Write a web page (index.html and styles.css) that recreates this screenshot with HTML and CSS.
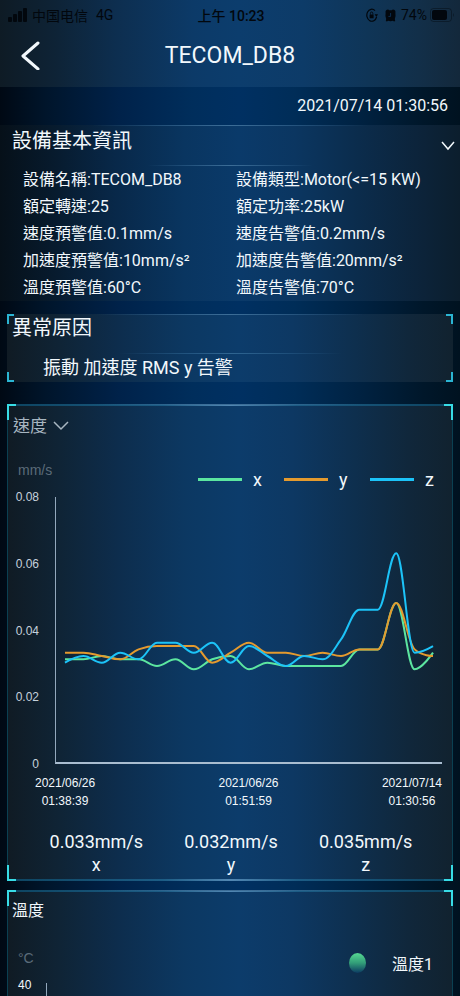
FILE: index.html
```html
<!DOCTYPE html>
<html lang="zh-Hant">
<head>
<meta charset="utf-8">
<meta name="viewport" content="width=device-width, initial-scale=1">
<title>TECOM_DB8</title>
<link rel="stylesheet" href="styles.css">
</head>
<body>
<div class="app">
  <header class="top">
    <div class="status">
      <div class="status-side">
        <svg class="signal" viewBox="0 0 20 14" aria-hidden="true"><rect x="0" y="9" width="4" height="5" rx="1"/><rect x="5" y="6" width="4" height="8" rx="1"/><rect x="10" y="3" width="4" height="11" rx="1"/><rect x="15" y="0" width="4" height="14" rx="1"/></svg>
        <span lang="zh-Hans">中国电信</span><span class="network">4G</span>
      </div>
      <div class="clock">上午 10:23</div>
      <div class="status-side status-end">
        <svg class="lock" viewBox="0 0 12 14" aria-hidden="true"><path d="M9 2.6A5 6 0 1 0 10.6 9" fill="none" stroke="currentColor" stroke-width="1.2"/><path d="M8.6 6.2h3.4L10.4 9z"/><rect x="3.6" y="6.4" width="4" height="3.8" rx=".5"/><path d="M4.4 6.6V5.4a1.2 1.4 0 0 1 2.4 0v1.2" fill="none" stroke="currentColor" stroke-width=".9"/></svg>
        <svg class="alarm" viewBox="0 0 11 13" aria-hidden="true"><path d="M.6 4Q0 .8 3.2.6L4.200 1.200h2.600L7.800 .6Q11 .8 10.400 4 11 7 9.800 10l.4 2-1.200.6-1-.9q-2.500.9-5 0l-1 .9L.8 12l.4-2Q0 7 .6 4z"/><path d="M5.600 4v3.400H3.400" fill="none" stroke="#0b3157" stroke-width=".9"/></svg>
        <span>74%</span>
        <svg class="battery" viewBox="0 0 24 14" aria-hidden="true"><rect x=".5" y=".5" width="21" height="13" rx="3" fill="none" stroke="currentColor" stroke-opacity=".4"/><rect x="2" y="2" width="15" height="10" rx="2"/><path d="M23 5v4q1.500-2 0-4" fill-opacity=".5"/></svg>
      </div>
    </div>
    <div class="nav">
      <button class="back" type="button" aria-label="返回"><svg viewBox="0 0 20 30" aria-hidden="true"><path d="M17 3 2 16l15 13" fill="none" stroke="currentColor" stroke-width="3" stroke-linecap="round" stroke-linejoin="round"/></svg></button>
      <h1>TECOM_DB8</h1>
    </div>
  </header>

  <main>
    <time class="stamp" datetime="2021-07-14T01:30:56">2021/07/14 01:30:56</time>

    <section class="info">
      <div class="info-head">
        <h2>設備基本資訊</h2>
        <button class="toggle" type="button" aria-label="收合"><svg viewBox="0 0 14 10" aria-hidden="true"><path d="M1 1l6 7 6-7" fill="none" stroke="currentColor" stroke-width="1.500"/></svg></button>
      </div>
      <div class="facts">
        <span>設備名稱:TECOM_DB8</span><span>設備類型:Motor(&lt;=15 KW)</span>
        <span>額定轉速:25</span><span>額定功率:25kW</span>
        <span>速度預警值:0.1mm/s</span><span>速度告警值:0.2mm/s</span>
        <span>加速度預警值:10mm/s²</span><span>加速度告警值:20mm/s²</span>
        <span>溫度預警值:60°C</span><span>溫度告警值:70°C</span>
      </div>
    </section>

    <section class="framed cause">
      <h2>異常原因</h2>
      <p>振動 加速度 RMS y 告警</p>
    </section>

    <section class="framed bordered speed">
      <label class="metric">
        <select aria-label="量測項目"><option>速度</option></select>
        <svg viewBox="0 0 16 10" aria-hidden="true"><path d="M1 1l7 7 7-7" fill="none" stroke="currentColor" stroke-width="1.500"/></svg>
      </label>
      <div class="chart-top">
        <span class="unit">mm/s</span>
        <ul class="legend">
          <li class="key-x">x</li><li class="key-y">y</li><li class="key-z">z</li>
        </ul>
      </div>
      <div class="chart">
        <div class="y-axis"><span>0.08</span><span>0.06</span><span>0.04</span><span>0.02</span><span>0</span></div>
        <svg class="plot" viewBox="0 0 387 267" preserveAspectRatio="none" role="img" aria-label="速度 x y z">
          <path class="line line-x"/><path class="line line-y"/><path class="line line-z"/>
        </svg>
      </div>
      <div class="x-axis">
        <span>2021/06/26<br>01:38:39</span><span>2021/06/26<br>01:51:59</span><span>2021/07/14<br>01:30:56</span>
      </div>
      <div class="readings">
        <div><span>0.033mm/s</span><span>x</span></div>
        <div><span>0.032mm/s</span><span>y</span></div>
        <div><span>0.035mm/s</span><span>z</span></div>
      </div>
    </section>

    <section class="framed bordered temp">
      <h3>溫度</h3>
      <div class="temp-top">
        <span class="unit">°C</span>
        <span class="temp-key"><i class="dot"></i>溫度1</span>
      </div>
      <div class="temp-chart"><span>40</span><div class="temp-plot"></div></div>
    </section>
  </main>
</div>
<script src="chart.js"></script>
</body>
</html>
```
FILE: styles.css
```css
* { box-sizing: border-box; }
body {
  margin: 0;
  background: #000d1b;
  color: #f2f8fc;
  font-family: Roboto, "Noto Sans CJK TC", sans-serif;
}
h1, h2, h3, p, ul { margin: 0; padding: 0; font-weight: 400; }
button, select { padding: 0; border: 0; background: none; color: inherit; font: inherit; }
svg { display: block; fill: currentColor; }

.app {
  height: 100vh;
  overflow: hidden;
  background: linear-gradient(90deg, #000914 0%, #00152b 10%, #00224a 26%, #002e5c 42%, #003062 52%, #002d58 64%, #002242 78%, #00172a 92%, #001220 100%);
}

.top {
  padding-bottom: 7px;
  background: linear-gradient(90deg, #0e1b25 0%, #0e2336 12%, #0d2e4f 25%, #0c3a68 42%, #0c3d6d 52%, #0d3b68 66%, #0f3557 80%, #122f49 91%, #13283b 100%);
}
.status {
  display: grid;
  grid-template-columns: 1fr auto 1fr;
  align-items: center;
  height: 30px;
  padding: 0 6px 0 8px;
  color: #02070d;
  font-size: 14px;
}
.status-side { display: flex; align-items: center; gap: 4px; }
.status-end { justify-content: flex-end; gap: 3px; }
.network { margin-left: 4px; }
.clock { font-weight: 500; }
.signal { width: 20px; height: 14px; }
.lock { width: 12px; height: 14px; }
.alarm { width: 11px; height: 13px; margin: 0 2px 0 4px; }
.battery { width: 24px; height: 14px; }
.nav {
  display: grid;
  grid-template-columns: 20px 1fr 20px;
  align-items: center;
  height: 50px;
  padding: 0 21px;
}
.back svg { width: 20px; height: 30px; }
h1 { font-size: 23px; text-align: center; }

.stamp {
  display: block;
  padding: 0 12px;
  font-size: 16px;
  line-height: 38px;
  text-align: right;
}

.info, .framed {
  --glass: linear-gradient(90deg, #101b24 0%, #0f2436 12%, #0d2d4d 25%, #0c3862 40%, #0c3c6b 52%, #0d3863 64%, #0e2f4e 78%, #10273b 90%, #11222f 100%);
  --glow: linear-gradient(90deg, transparent 20%, #3c6d97 50%, transparent 80%);
}
.info {
  background:
    var(--glow) 0 0 / 100% 1px no-repeat,
    var(--glow) 50% 40px / 60% 1px no-repeat,
    linear-gradient(90deg, #061019 0%, #071b2e 12%, #082849 25%, #093560 40%, #0a3a6a 52%, #0b3661 64%, #0b2c4c 78%, #0c2339 92%, #0c1e2d 100%);
}
.info-head {
  display: flex;
  align-items: center;
  justify-content: space-between;
  height: 41px;
  padding: 0 5px 10px 12px;
}
h2 { font-size: 20px; line-height: 28px; }
.toggle { align-self: flex-end; margin-bottom: 5px; }
.toggle svg { width: 14px; height: 10px; }
.facts {
  display: grid;
  grid-template-columns: 213fr 224fr;
  padding-left: 23px;
  font-size: 16px;
  line-height: 27px;
}

.framed {
  --c: #38dce6;
  --arm: 7px;
  --leg: 10px;
  --w: 1px;
  margin: 0 7px;
  background:
    linear-gradient(var(--c) 0 0) 0 0 / var(--arm) var(--w) no-repeat,
    linear-gradient(var(--c) 0 0) 0 0 / var(--w) var(--leg) no-repeat,
    linear-gradient(var(--c) 0 0) 100% 0 / var(--arm) var(--w) no-repeat,
    linear-gradient(var(--c) 0 0) 100% 0 / var(--w) var(--leg) no-repeat,
    linear-gradient(var(--c) 0 0) 0 100% / var(--arm) var(--w) no-repeat,
    linear-gradient(var(--c) 0 0) 0 100% / var(--w) var(--leg) no-repeat,
    linear-gradient(var(--c) 0 0) 100% 100% / var(--arm) var(--w) no-repeat,
    linear-gradient(var(--c) 0 0) 100% 100% / var(--w) var(--leg) no-repeat,
    var(--glow) 0 0 / 100% 1px no-repeat,
    var(--edge, none) 0 0 / 100% 2px no-repeat,
    var(--edge, none) 0 100% / 100% 2px no-repeat,
    var(--side, none) 0 0 / 1px 100% no-repeat,
    var(--side, none) 100% 0 / 1px 100% no-repeat,
    var(--rule, none) 50% 39px / 50% 1px no-repeat,
    var(--glass);
}
.bordered {
  --arm: 9px;
  --leg: 16px;
  --w: 2px;
  --edge: linear-gradient(90deg, #0d4460, #1c5c85 35%, #5287b3 50%, #1c5c85 65%, #0d4460);
  --side: linear-gradient(#0b4052 0 0);
}
.cause {
  --c: #2bb5d3;
  --w: 2px;
  --rule: linear-gradient(90deg, transparent, #2f6591 50%, transparent);
  height: 68px;
  margin-top: 13px;
  margin-bottom: 22px;
  padding-left: 5px;
}
.cause p { padding-left: 31px; font-size: 18px; line-height: 52px; }

.speed { padding: 10px 11px 5px 6px; }
.metric { display: inline-flex; align-items: center; gap: 6px; color: #a8b6c1; }
.metric select { appearance: none; height: 24px; font-size: 17px; }
.metric svg { width: 16px; height: 10px; }
.chart-top {
  display: flex;
  justify-content: space-between;
  align-items: center;
  height: 36px;
  margin-top: 23px;
}
.unit { align-self: flex-start; padding-left: 5px; color: #5b6b79; font-family: "Liberation Sans", Arial, sans-serif; font-size: 14px; line-height: 18px; }
.legend { display: flex; gap: 22px; list-style: none; padding-right: 8px; font-size: 18px; }
.legend li { display: flex; align-items: center; gap: 11px; width: 64px; }
.legend li::before { content: ""; width: 44px; height: 3px; flex: none; background: var(--key); }
.key-x { --key: #5ce6a0; }
.key-y { --key: #e49a2e; }
.key-z { --key: #1cc3f8; }

.chart { display: grid; grid-template-columns: 42px 1fr; }
.y-axis, .x-axis, .temp-chart { font-family: "Liberation Sans", Arial, sans-serif; font-size: 12px; }
.y-axis {
  display: flex;
  flex-direction: column;
  justify-content: space-between;
  margin: -8px 0;
  padding-right: 16px;
  line-height: 16px;
  text-align: right;
  color: #c6d2dc;
}
.plot { width: 100%; height: 267px; border-left: 1px solid #93a8bc; border-bottom: 2px solid #a9bdd0; overflow: visible; }
.line { fill: none; stroke-width: 2; vector-effect: non-scaling-stroke; }
.line-x { stroke: #5ce6a0; }
.line-y { stroke: #e49a2e; }
.line-z { stroke: #1cc3f8; }

.x-axis {
  display: grid;
  grid-template-columns: auto 1fr auto;
  margin-top: 10px;
  padding-left: 22px;
  line-height: 18px;
  text-align: center;
}
.x-axis span:nth-child(2) { padding-left: 20px; }
.readings {
  display: grid;
  grid-template-columns: repeat(3, 1fr);
  margin-top: 20px;
  padding: 0 9px 0 16px;
  text-align: center;
  font-size: 18px;
  line-height: 23px;
}
.readings span { display: block; }

.temp { margin-top: 9px; padding: 8px 20px 40px 5px; }
h3 { font-size: 16px; line-height: 26px; }
.temp-top { display: flex; justify-content: space-between; height: 28px; margin-top: 25px; }
.temp-top .unit { padding-left: 6px; }
.temp-key { display: flex; align-items: center; gap: 26px; font-size: 16px; }
.dot { width: 17px; height: 20px; border-radius: 50%; background: linear-gradient(#56d992, #329d78 50%, #0c3b62); }
.temp-chart { display: flex; gap: 15px; padding-left: 6px; line-height: 16px; }
.temp-plot { flex: 1; height: 100px; margin-top: 6px; border-left: 1px solid #93a8bc; }
```
FILE: chart.js
```js
// Velocity samples in mm/s, one list per axis.
const series = {
  x: [.031,.031,.032,.031,.031,.029,.031,.028,.031,.032,.028,.030,.029,.029,.029,.029,.034,.034,.048,.028,.033],
  y: [.033,.033,.032,.031,.034,.035,.035,.035,.030,.033,.036,.033,.033,.032,.033,.032,.034,.034,.048,.034,.032],
  z: [.030,.032,.030,.033,.031,.036,.036,.033,.036,.030,.035,.032,.029,.032,.031,.037,.046,.046,.063,.033,.035]
};
const START = 9, SPAN = 369, HEIGHT = 267, MAX = 0.08, TENSION = 0.19;

const between = (v, a, b) => Math.max(Math.min(a, b), Math.min(Math.max(a, b), v));

// Bezier curve whose control points stay inside each segment's box.
function smoothPath(points) {
  let d = `M${points[0]}`;
  let out = points[0];
  for (let i = 1; i < points.length; i++) {
    const p = points[i], prev = points[i - 1], next = points[i + 1];
    if (!next) { d += `C${out} ${p} ${p}`; break; }
    const ahead = p.map((v, k) => between(v + (next[k] - prev[k]) * TENSION, v, next[k]));
    const into = p.map((v, k) => between(2 * v - ahead[k], prev[k], v));
    d += `C${out} ${into} ${p}`;
    out = p.map((v, k) => 2 * v - into[k]);
  }
  return d;
}

for (const [name, values] of Object.entries(series)) {
  const points = values.map((v, i) => [START + i * SPAN / (values.length - 1), HEIGHT - v / MAX * HEIGHT]);
  document.querySelector(`.line-${name}`).setAttribute("d", smoothPath(points));
}
```
